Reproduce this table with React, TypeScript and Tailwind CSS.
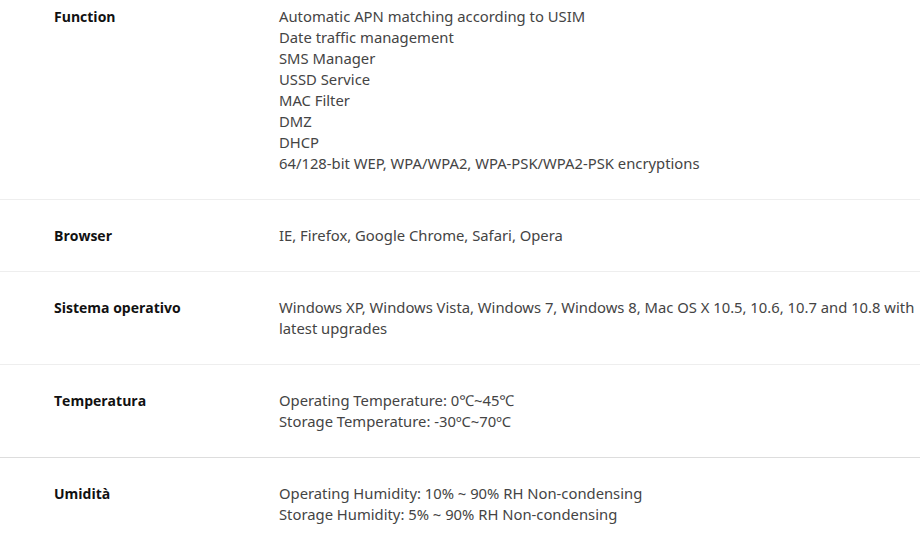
const rows: { label: string; lines: string[]; first?: boolean; darker?: boolean }[] = [
  {
    label: "Function",
    lines: [
      "Automatic APN matching according to USIM",
      "Date traffic management",
      "SMS Manager",
      "USSD Service",
      "MAC Filter",
      "DMZ",
      "DHCP",
      "64/128-bit WEP, WPA/WPA2, WPA-PSK/WPA2-PSK encryptions",
    ],
    first: true,
  },
  { label: "Browser", lines: ["IE, Firefox, Google Chrome, Safari, Opera"] },
  {
    label: "Sistema operativo",
    lines: [
      "Windows XP, Windows Vista, Windows 7, Windows 8, Mac OS X 10.5, 10.6, 10.7 and 10.8 with latest upgrades",
    ],
  },
  {
    label: "Temperatura",
    lines: ["Operating Temperature: 0℃~45℃", "Storage Temperature: -30ºC~70ºC"],
  },
  {
    label: "Umidità",
    lines: ["Operating Humidity: 10% ~ 90% RH Non-condensing", "Storage Humidity: 5% ~ 90% RH Non-condensing"],
    darker: true,
  },
];

export default function App() {
  return (
    <div className="w-[920px] h-[545px] overflow-hidden bg-white font-['Noto_Sans',sans-serif]">
      {rows.map((r) => (
        <div
          key={r.label}
          className={
            (r.first ? "pt-[6px] " : "pt-[25px] border-t ") +
            (r.darker ? "border-[#dddddd] " : "border-[#eeeeee] ") +
            "pb-[25px] flex"
          }
        >
          <div className="w-[279px] pl-[54px] shrink-0 text-[14px] leading-[21px] font-bold text-[#111111] font-['Open_Sans',sans-serif]">
            {r.label}
          </div>
          <div className="w-[638px] text-[14.8px] leading-[21px] text-[#444444]">
            {r.lines.map((l, j) => (
              <div key={j}>{l}</div>
            ))}
          </div>
        </div>
      ))}
    </div>
  );
}
